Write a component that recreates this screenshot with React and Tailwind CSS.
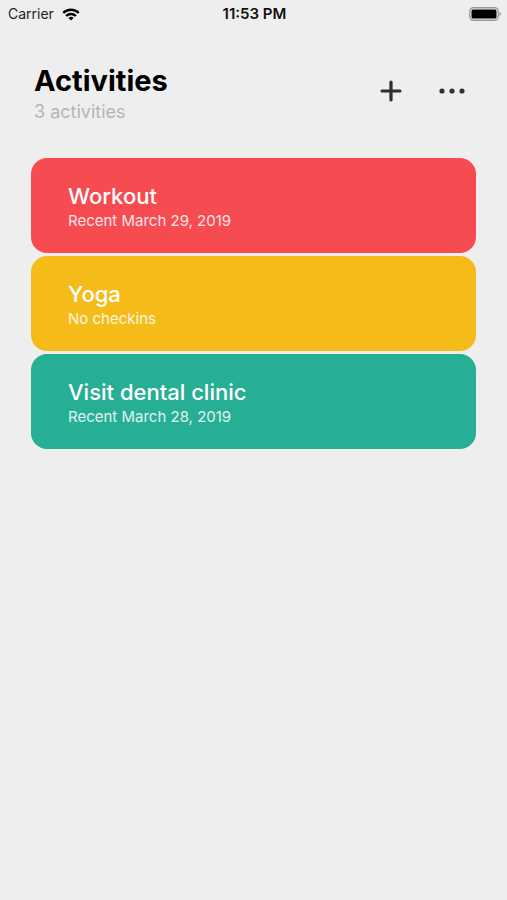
import React from "react";

const activities = [
  { name: "Workout", status: "Recent March 29, 2019", color: "bg-[#f74b52]" },
  { name: "Yoga", status: "No checkins", color: "bg-[#f5bc19]" },
  {
    name: "Visit dental clinic",
    status: "Recent March 28, 2019",
    color: "bg-[#27af96]",
  },
];

function WifiIcon() {
  return (
    <svg viewBox="0 0 18 13" className="h-[13px] w-[18px]" aria-hidden="true">
      <g fill="none" stroke="#000" strokeWidth="2.4">
        <path d="M1.2 4.9 A11.2 11.2 0 0 1 16.8 4.9" />
        <path d="M4.1 8 A7 7 0 0 1 13.9 8" />
      </g>
      <path d="M9 12.6 L6.4 9.9 A3.8 3.8 0 0 1 11.6 9.9 Z" />
    </svg>
  );
}

function BatteryIcon() {
  return (
    <svg viewBox="0 0 32 14" className="h-3.5 w-8" aria-hidden="true">
      <rect x="0.75" y="0.75" width="28.5" height="12.5" rx="3.5" fill="#eee" stroke="#9a9a9a" strokeWidth="1.3" />
      <rect x="2.5" y="2.5" width="25" height="9" rx="1.5" />
      <path d="M30.5 5 Q31.8 5.6 31.8 7 T30.5 9 Z" fill="#888" />
    </svg>
  );
}

function StatusBar() {
  return (
    <div className="grid h-7 grid-cols-3 items-center pr-1.5 pl-2 text-[15px] leading-5">
      <div className="flex items-center gap-2">
        <span className="text-[14px] text-[#222]">Carrier</span>
        <WifiIcon />
      </div>
      <span className="text-center font-semibold text-[#111]">11:53 PM</span>
      <div className="flex justify-end">
        <BatteryIcon />
      </div>
    </div>
  );
}

function ActivityCard({ activity }) {
  return (
    <li>
      <button
        type="button"
        className={`flex h-[95px] w-full flex-col justify-center rounded-2xl px-[37px] text-left text-white ${activity.color}`}
      >
        <span className="text-[22px] leading-[30px] font-medium">{activity.name}</span>
        <span className="text-[15px] leading-5 text-white/85">{activity.status}</span>
      </button>
    </li>
  );
}

export default function App() {
  return (
    <div className="min-h-screen bg-[#eeeeee] font-['Inter',sans-serif] text-black">
      <StatusBar />
      <header className="flex items-start justify-between pt-[34px] pr-[41px] pl-[34px]">
        <div>
          <h1 className="text-[29px] leading-[38px] font-bold">Activities</h1>
          <p className="text-[18px] leading-6 text-[#b5b5b5]">3 activities</p>
        </div>
        <div className="flex gap-[35px] pt-[17px]">
          <button type="button" aria-label="Add activity">
            <svg viewBox="0 0 24 24" className="size-6" stroke="#2e2e2e" strokeWidth="3.2" strokeLinecap="round">
              <path d="M12 3v18M3 12h18" />
            </svg>
          </button>
          <button type="button" aria-label="More options">
            <svg viewBox="0 0 28 24" className="h-6 w-7" fill="#333">
              <circle cx="4" cy="12" r="2.6" />
              <circle cx="14" cy="12" r="2.6" />
              <circle cx="24" cy="12" r="2.6" />
            </svg>
          </button>
        </div>
      </header>
      <ul className="flex flex-col gap-[3px] px-[31px] pt-[34px]">
        {activities.map((activity) => (
          <ActivityCard key={activity.name} activity={activity} />
        ))}
      </ul>
    </div>
  );
}
